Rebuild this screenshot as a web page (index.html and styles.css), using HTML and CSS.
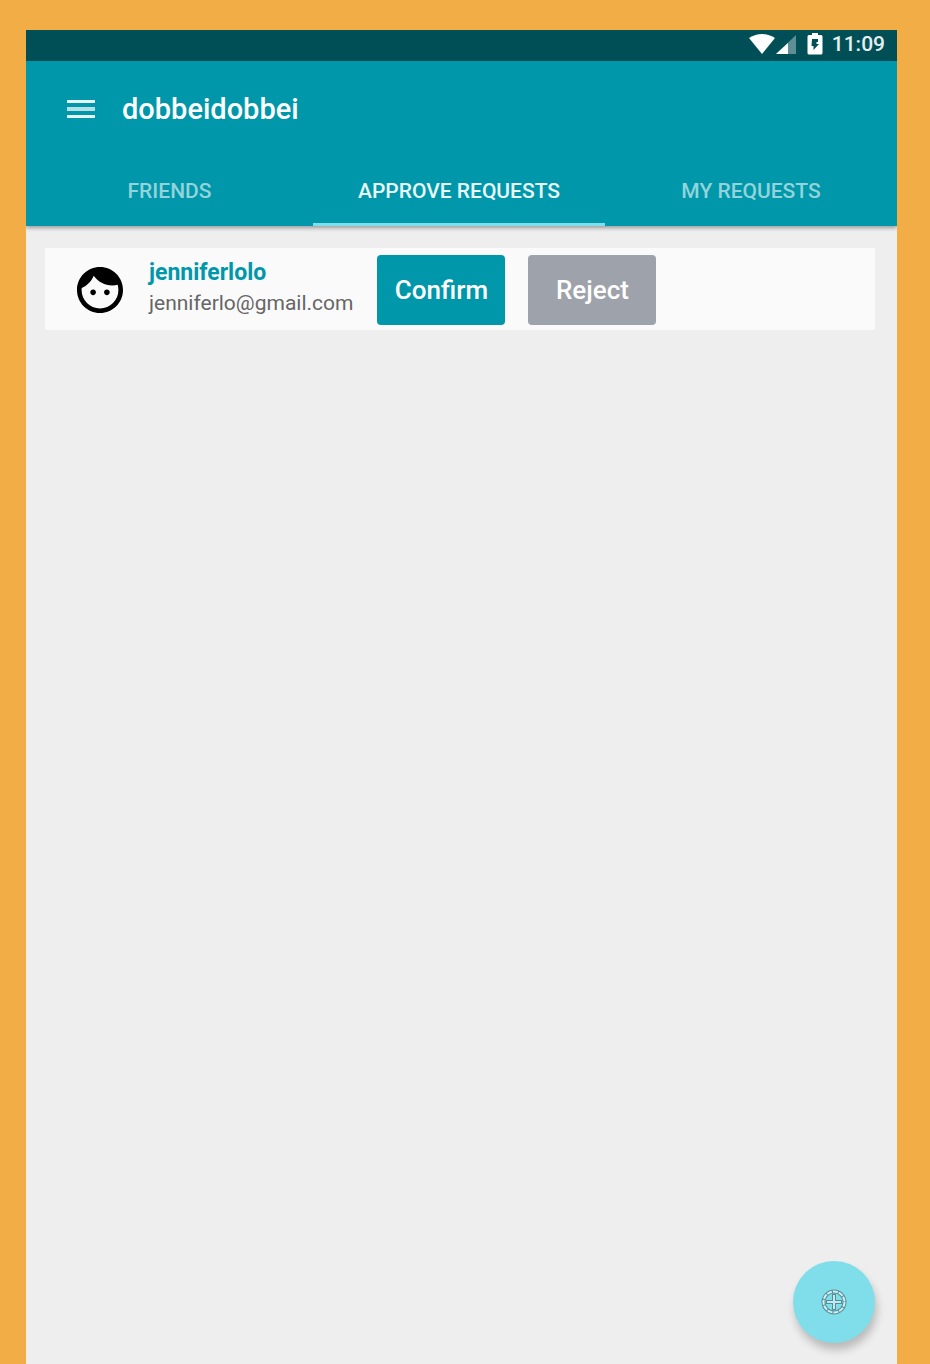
FILE: index.html
```html
<!DOCTYPE html>
<html lang="en">
<head>
<meta charset="utf-8">
<meta name="viewport" content="width=device-width, initial-scale=1">
<title>dobbeidobbei</title>
<link rel="stylesheet" href="styles.css">
</head>
<body>
<div class="screen">
  <header class="header">
    <div class="status">
      <svg class="signals" viewBox="0 0 48 22" aria-hidden="true">
        <path d="M0 5Q13-3 26 5L13 21Z" fill="#fff"/>
        <path d="M27 21L47 2V21Z" fill="#5e8f95"/>
        <path d="M27 21L39 10V21Z" fill="#fff"/>
      </svg>
      <svg class="battery" viewBox="0 0 16 22" aria-hidden="true">
        <path d="M5 0H11V2H14Q15.500 2 15.500 3.500V20Q15.500 21.500 14 21.500H2Q.5 21.500 .5 20V3.500Q.5 2 2 2H5Z" fill="#fff"/>
        <path d="M5 6H11V9H9.500V11H12L6.500 17V13H4.500Z" fill="#004f57"/>
      </svg>
      <span class="clock">11:09</span>
    </div>
    <div class="toolbar">
      <button class="menu" type="button" aria-label="Open menu">
        <svg viewBox="0 0 28 20" aria-hidden="true">
          <path d="M0 1H28V4H0ZM0 16H28V19H0Z" fill="#e4f6f8"/>
          <path d="M0 8H28V12H0Z" fill="#b5e1e6"/>
        </svg>
      </button>
      <h1 class="title">dobbeidobbei</h1>
    </div>
    <nav class="tabs">
      <a class="tab" href="#friends">FRIENDS</a>
      <a class="tab tab-active" href="#approve" aria-current="page">APPROVE REQUESTS</a>
      <a class="tab" href="#mine">MY REQUESTS</a>
    </nav>
  </header>
  <main class="content">
    <article class="request">
      <svg class="avatar" viewBox="2 2 20 20" aria-hidden="true">
        <path d="M9 11.750c-.69 0-1.250.56-1.250 1.250s.56 1.250 1.250 1.250 1.250-.56 1.250-1.250-.56-1.250-1.250-1.250zm6 0c-.69 0-1.250.56-1.250 1.250s.56 1.250 1.250 1.250 1.250-.56 1.250-1.250-.56-1.250-1.250-1.250zM12 2C6.480 2 2 6.480 2 12s4.480 10 10 10 10-4.480 10-10S17.520 2 12 2zm0 18c-4.410 0-8-3.590-8-8 0-.29.020-.58.050-.86 2.360-1.050 4.230-2.980 5.210-5.370C11.070 8.330 14.050 10 17.420 10c.78 0 1.530-.09 2.250-.26.210.71.330 1.470.33 2.260 0 4.410-3.590 8-8 8z"/>
      </svg>
      <div class="person">
        <h2 class="name">jenniferlolo</h2>
        <p class="email">jenniferlo@gmail.com</p>
      </div>
      <div class="actions">
        <button class="action confirm" type="button">Confirm</button>
        <button class="action reject" type="button">Reject</button>
      </div>
    </article>
  </main>
  <button class="fab" type="button" aria-label="Add friend">
    <svg viewBox="0 0 28 28" fill="none" aria-hidden="true">
      <circle cx="14" cy="14" r="10.500" stroke="#528f98" stroke-width="4"/>
      <circle cx="14" cy="14" r="10.500" stroke="#d5edf0" stroke-width="2" stroke-dasharray="5 1"/>
      <path d="M14 6V22M6 14H22" stroke="#528f98" stroke-width="4"/>
      <path d="M14 7V21M7 14H21" stroke="#c4e8ec" stroke-width="2"/>
    </svg>
  </button>
</div>
</body>
</html>
```
FILE: styles.css
```css
* {
  box-sizing: border-box;
}

body {
  margin: 0;
  padding: 30px 33px 0 26px;
  background: #f2ad46;
  font-family: Roboto, "Liberation Sans", sans-serif;
}

h1, h2, p {
  margin: 0;
}

button {
  padding: 0;
  border: 0;
  font-family: inherit;
  cursor: pointer;
}

svg {
  display: block;
}

.screen {
  position: relative;
  min-height: calc(100vh - 30px);
  background: #eee;
}

.header {
  background: #0097aa;
  box-shadow: 0 2px 4px rgba(0, 0, 0, 0.35);
  clip-path: inset(0 0 -8px 0);
}

.status {
  display: flex;
  align-items: center;
  justify-content: flex-end;
  height: 31px;
  padding: 0 12px 4px 0;
  background: #004f57;
  color: #e6eff0;
}

.signals {
  width: 48px;
  height: 22px;
  margin-right: 10px;
}

.battery {
  width: 16px;
  height: 22px;
  margin-right: 9px;
}

.clock {
  font-size: 21px;
  font-weight: 500;
  line-height: 28px;
}

.toolbar {
  display: flex;
  align-items: center;
  gap: 27px;
  height: 96px;
  padding-left: 41px;
}

.menu {
  width: 28px;
  background: none;
}

.title {
  color: #fff;
  font-size: 29px;
  font-weight: 500;
}

.tabs {
  display: grid;
  grid-template-columns: 287fr 292fr 292fr;
}

.tab {
  height: 69px;
  border-bottom: 3px solid transparent;
  color: #93d3db;
  font-size: 21px;
  font-weight: 500;
  line-height: 68px;
  text-align: center;
  text-decoration: none;
}

.tab-active {
  border-color: #80deea;
  color: #e8f7f9;
}

.content {
  padding: 22px 22px 22px 19px;
}

.request {
  display: flex;
  align-items: center;
  min-height: 82px;
  padding: 7px 32px 5px;
  background: #fafafa;
}

.avatar {
  width: 46px;
  height: 46px;
  margin-right: 26px;
}

.person {
  margin-right: 24px;
  padding-bottom: 4px;
}

.name {
  color: #0097aa;
  font-size: 23px;
  font-weight: 700;
  line-height: 30px;
}

.email {
  color: #666;
  font-size: 21px;
  line-height: 30px;
}

.actions {
  display: flex;
  gap: 23px;
}

.action {
  width: 128px;
  height: 70px;
  border-radius: 4px;
  color: #fff;
  font-size: 26px;
  font-weight: 500;
}

.confirm {
  background: #0097aa;
}

.reject {
  background: #9ea2aa;
}

.fab {
  position: absolute;
  right: 22px;
  bottom: 21px;
  display: grid;
  place-items: center;
  width: 82px;
  height: 82px;
  border-radius: 50%;
  background: #80deea;
  box-shadow: 2px 7px 8px rgba(0, 0, 0, 0.22);
}

.fab svg {
  width: 28px;
  height: 28px;
}
```
